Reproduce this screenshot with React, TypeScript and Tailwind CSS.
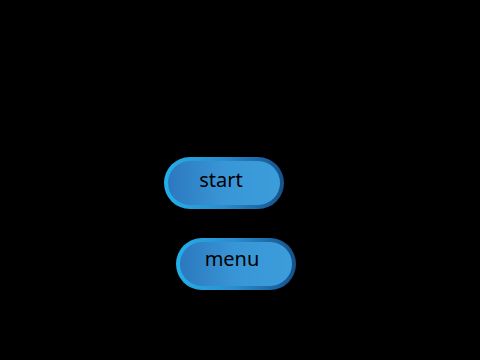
import React from "react";

function PillButton({
  label,
  className = "",
  innerClass = "pb-[6px] pr-[6px]",
}: {
  label: string;
  className?: string;
  innerClass?: string;
}) {
  return (
    <div
      className={`w-[120px] h-[52px] rounded-full p-[4px] bg-gradient-to-r from-[#22b0e8] via-[#2a8ccf] to-[#16508a] ${className}`}
    >
      <div
        className={`w-full h-full rounded-full bg-gradient-to-r from-[#2c78bf] via-[#3996d6] to-[#3c9ddb] flex items-center justify-center ${innerClass}`}
      >
        <span
          className="text-[20px] text-black leading-none"
          style={{ fontFamily: '"Noto Sans", "Open Sans", sans-serif' }}
        >
          {label}
        </span>
      </div>
    </div>
  );
}

export default function App() {
  return (
    <div className="w-[480px] h-[360px] bg-black overflow-hidden">
      <div className="flex flex-col items-start pt-[157px] pl-[164px]">
        <PillButton label="start" />
        <PillButton label="menu" className="ml-[12px] mt-[29px]" innerClass="pb-[10px] pr-[8px]" />
      </div>
    </div>
  );
}
